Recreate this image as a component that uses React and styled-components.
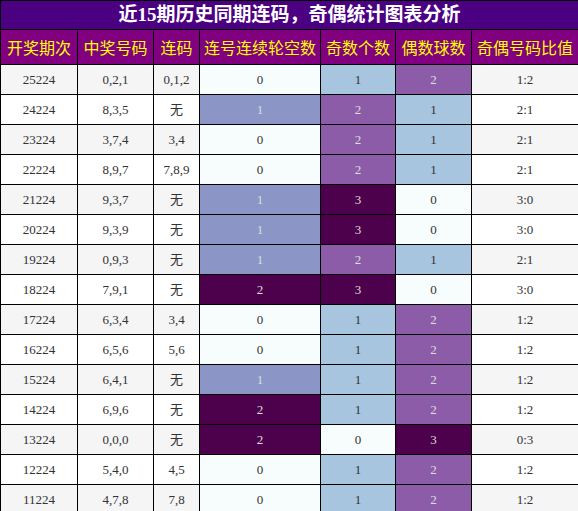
import React from "react";
import styled, { createGlobalStyle } from "styled-components";

const GlobalStyle = createGlobalStyle`
  body {
    margin: 0;
    background: #fff;
  }
`;

const Table = styled.table`
  width: 578px;
  border-collapse: collapse;
  table-layout: fixed;
  font-family: "Liberation Serif", "Noto Sans CJK SC", serif;
`;

const TitleCell = styled.th`
  background: #4b0082;
  color: #fff;
  font-family: "Liberation Serif", "Noto Sans CJK SC", sans-serif;
  font-size: 19px;
  font-weight: bold;
  height: 28px;
  line-height: 28px;
  padding: 0;
  border: 1px solid #000;
  text-align: center;
`;

const HeadCell = styled.th`
  background: #800080;
  color: #ffff00;
  font-family: "Noto Sans CJK SC", sans-serif;
  font-size: 16px;
  font-weight: normal;
  line-height: 24px;
  padding: 5px 0;
  border: 1px solid #000;
  text-align: center;
  white-space: nowrap;
`;

const Cell = styled.td`
  background: ${({ $bg }) => $bg};
  color: ${({ $light }) => ($light ? "#dcdcdc" : "#333")};
  font-size: 13px;
  line-height: 19px;
  padding: 5px 0;
  border: 1px solid #000;
  text-align: center;
`;

const heat = {
  0: "#f7fcfd",
  1: "#a8c5e0",
  2: "#8c5ca9",
  3: "#4d004b",
};

const runHeat = {
  0: "#f7fcfd",
  1: "#8c96c6",
  2: "#4d004b",
};

const rows = [
  ["25224", "0,2,1", "0,1,2", 0, 1, 2, "1:2"],
  ["24224", "8,3,5", "无", 1, 2, 1, "2:1"],
  ["23224", "3,7,4", "3,4", 0, 2, 1, "2:1"],
  ["22224", "8,9,7", "7,8,9", 0, 2, 1, "2:1"],
  ["21224", "9,3,7", "无", 1, 3, 0, "3:0"],
  ["20224", "9,3,9", "无", 1, 3, 0, "3:0"],
  ["19224", "0,9,3", "无", 1, 2, 1, "2:1"],
  ["18224", "7,9,1", "无", 2, 3, 0, "3:0"],
  ["17224", "6,3,4", "3,4", 0, 1, 2, "1:2"],
  ["16224", "6,5,6", "5,6", 0, 1, 2, "1:2"],
  ["15224", "6,4,1", "无", 1, 1, 2, "1:2"],
  ["14224", "6,9,6", "无", 2, 1, 2, "1:2"],
  ["13224", "0,0,0", "无", 2, 0, 3, "0:3"],
  ["12224", "5,4,0", "4,5", 0, 1, 2, "1:2"],
  ["11224", "4,7,8", "7,8", 0, 1, 2, "1:2"],
];

const headers = ["开奖期次", "中奖号码", "连码", "连号连续轮空数", "奇数个数", "偶数球数", "奇偶号码比值"];
const widths = [77, 76, 46, 121, 75, 76, 107];

export default function App() {
  return (
    <>
      <GlobalStyle />
      <Table>
        <colgroup>
          {widths.map((w, i) => (
            <col key={i} style={{ width: w }} />
          ))}
        </colgroup>
        <thead>
          <tr>
            <TitleCell colSpan={7}>近15期历史同期连码，奇偶统计图表分析</TitleCell>
          </tr>
          <tr>
            {headers.map((h) => (
              <HeadCell key={h}>{h}</HeadCell>
            ))}
          </tr>
        </thead>
        <tbody>
          {rows.map(([issue, nums, run, gap, odd, even, ratio], i) => {
            const base = i % 2 === 0 ? "#f5f5f5" : "#fff";
            return (
              <tr key={issue}>
                <Cell $bg={base}>{issue}</Cell>
                <Cell $bg={base}>{nums}</Cell>
                <Cell $bg={base}>{run}</Cell>
                <Cell $bg={runHeat[gap]} $light={gap > 0}>{gap}</Cell>
                <Cell $bg={heat[odd]} $light={odd > 1}>{odd}</Cell>
                <Cell $bg={heat[even]} $light={even > 1}>{even}</Cell>
                <Cell $bg={base}>{ratio}</Cell>
              </tr>
            );
          })}
        </tbody>
      </Table>
    </>
  );
}
